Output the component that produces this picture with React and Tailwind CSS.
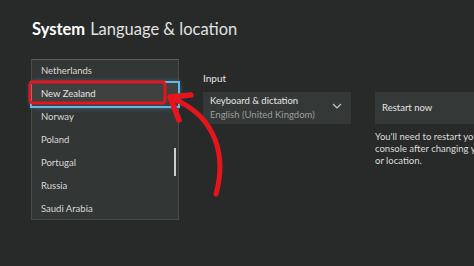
import React from 'react';

const countries = ['Netherlands', 'New Zealand', 'Norway', 'Poland', 'Portugal', 'Russia', 'Saudi Arabia'];

const App = () => {
  return (
    <div
      className="relative w-[474px] h-[266px] overflow-hidden bg-[#272a28] text-[#e6e6e6]"
      style={{ fontFamily: 'Lato, "Open Sans", sans-serif' }}
    >
      {/* Header */}
      <div className="pl-[32px] pt-[18px] h-[59px] text-[16.5px] leading-[22px]">
        <span className="font-bold text-white">System</span>
        <span className="ml-[5px] text-[#e2e2e2]">Language &amp; location</span>
      </div>

      <div className="flex pl-[31px]">
        {/* Region dropdown list */}
        <div className="relative shrink-0 w-[148px] h-[161px] bg-[#323634] border border-[#474b49] border-t-[#5a5e5c]">
          {countries.map((c) => (
            <div
              key={c}
              className={
                c === 'New Zealand'
                  ? 'h-[23px] flex items-center pl-[9px] text-[9.5px] text-[#e4e4e4] bg-[#3d413f] ring-2 ring-[#63b9e6] shadow-[0_0_6px_#4aa6dc]'
                  : 'h-[23px] flex items-center pl-[9px] text-[9.5px] text-[#d9d9d9]'
              }
            >
              {c}
            </div>
          ))}
          <div className="absolute right-[2px] top-[88px] w-[2px] h-[28px] bg-[#d0d0d0]" />
        </div>

        {/* Input column */}
        <div className="shrink-0 ml-[24px] pt-[13px]">
          <div className="text-[10px] leading-[12px] text-[#e6e6e6]">Input</div>
          <div className="mt-[8px] w-[148px] h-[32px] bg-[#343836] flex items-center justify-between pl-[7px] pr-[9px]">
            <div className="leading-[14px]">
              <div className="text-[9.5px] text-[#e6e6e6]">Keyboard &amp; dictation</div>
              <div className="text-[9.5px] text-[#9b9e9c]">English (United Kingdom)</div>
            </div>
            <svg width="10" height="6" viewBox="0 0 10 6" className="mt-[-4px]">
              <polyline points="1,1 5,5 9,1" fill="none" stroke="#c8c8c8" strokeWidth="1.2" />
            </svg>
          </div>
        </div>

        {/* Restart column */}
        <div className="shrink-0 ml-[24px] pt-[33px]">
          <div className="w-[150px] h-[32px] bg-[#343836] flex items-center pl-[7px] text-[9.5px] text-[#e6e6e6]">
            Restart now
          </div>
          <div className="mt-[7px] text-[9.5px] leading-[12px] text-[#dcdcdc] whitespace-nowrap">
            You'll need to restart your
            <br />
            console after changing your language
            <br />
            or location.
          </div>
        </div>
      </div>

      {/* Red annotation */}
      <svg className="absolute left-0 top-0 pointer-events-none" width="474" height="266" viewBox="0 0 474 266">
        <rect x="30" y="82" width="135" height="21" rx="3" fill="none" stroke="#e5141d" strokeWidth="3" />
        <path d="M216 194 C226 158 218 118 174 99" fill="none" stroke="#e5141d" strokeWidth="5" strokeLinecap="round" />
        <polyline points="191,95 170,97 179,120" fill="none" stroke="#e5141d" strokeWidth="5.5" strokeLinecap="round" strokeLinejoin="round" />
      </svg>
    </div>
  );
};

export default App;
